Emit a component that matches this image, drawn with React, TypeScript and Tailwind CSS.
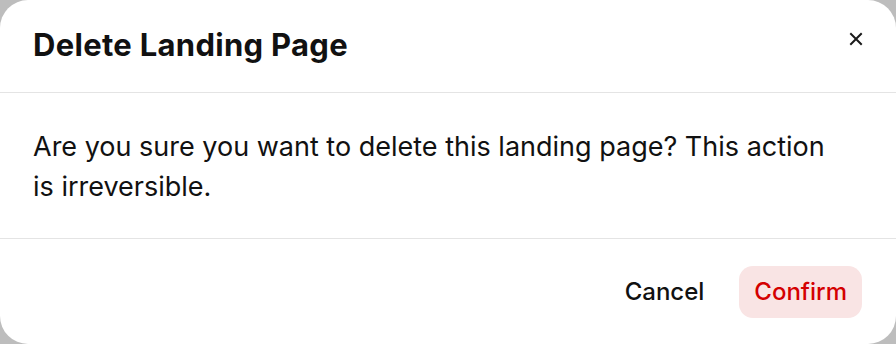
import React from "react";

export default function App() {
  return (
    <div className="w-[896px] h-[344px] bg-[#bdbdbd] overflow-hidden" style={{ fontFamily: "Inter, 'Noto Sans', sans-serif" }}>
      <div className="w-full h-full bg-white rounded-[28px] flex flex-col">
        <div className="h-[93px] px-[33px] flex items-center justify-between border-b border-[#e4e4e4] shrink-0">
          <h2 className="text-[31px] font-bold text-[#111] tracking-[0.3px] mt-[-2px]">Delete Landing Page</h2>
          <button className="w-6 h-6 flex items-center justify-center mr-[-5px] mt-[-14px]">
            <svg width="14" height="14" viewBox="0 0 14 14" fill="none" stroke="#1a1a1a" strokeWidth="2" strokeLinecap="square">
              <path d="M2 2L12 12M12 2L2 12" />
            </svg>
          </button>
        </div>
        <div className="h-[146px] px-[33px] pt-[34px] border-b border-[#e4e4e4] shrink-0">
          <p className="text-[27px] leading-[40px] text-[#111] max-w-[800px]">
            Are you sure you want to delete this landing page? This action is irreversible.
          </p>
        </div>
        <div className="flex-1 flex items-center justify-end px-[34px] gap-[35px]">
          <button className="text-[24px] font-medium text-[#111]">Cancel</button>
          <button className="h-[52px] px-[15px] rounded-[14px] bg-[#f9e4e4] text-[24px] font-medium text-[#d40000]">Confirm</button>
        </div>
      </div>
    </div>
  );
}
